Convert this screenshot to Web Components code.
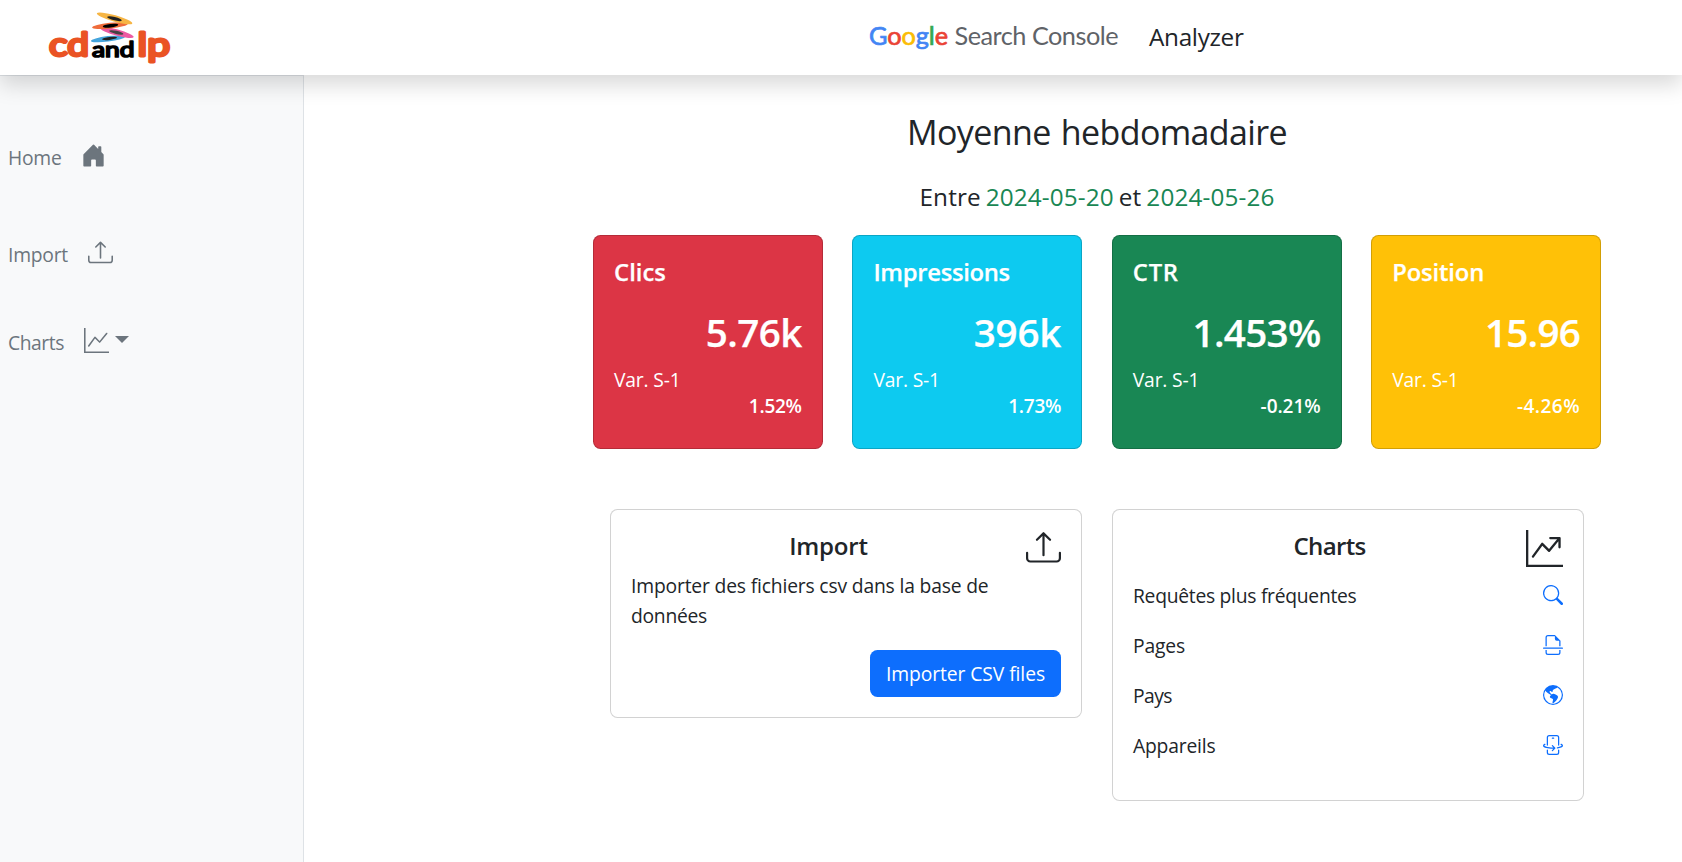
<!DOCTYPE html>
<html lang="fr">
<head>
<meta charset="utf-8">
<title>Search Console Analyzer</title>
<style>
html,body{margin:0;height:100%;overflow:hidden;background:#fff}
body{font-family:"Open Sans","Noto Sans",sans-serif;font-size:19.3px;line-height:30px;color:#212529}
</style>
</head>
<body>
<app-shell>
  <app-header slot="header"></app-header>
  <side-bar slot="side">
    <side-link label="Home" w="53.5" icon="house" gap="19.5"></side-link>
    <side-link label="Import" w="60" icon="upload" gap="20"></side-link>
    <side-link label="Charts" w="56" icon="graph" gap="20" caret></side-link>
  </side-bar>
  <dash-board></dash-board>
</app-shell>
<script>
const ICONS = {
  house: 'M6.5 14.5v-3.505c0-.245.25-.495.5-.495h2c.25 0 .5.25.5.5v3.5a.5.5 0 0 0 .5.5h4a.5.5 0 0 0 .5-.5v-7a.5.5 0 0 0-.146-.354L13 5.793V2.5a.5.5 0 0 0-.5-.5h-1a.5.5 0 0 0-.5.5v1.293L8.354 1.146a.5.5 0 0 0-.708 0l-6 6A.5.5 0 0 0 1.5 7.5v7a.5.5 0 0 0 .5.5h4a.5.5 0 0 0 .5-.5',
  upload: 'M.5 9.9a.5.5 0 0 1 .5.5v2.5a1 1 0 0 0 1 1h12a1 1 0 0 0 1-1v-2.5a.5.5 0 0 1 1 0v2.5a2 2 0 0 1-2 2H2a2 2 0 0 1-2-2v-2.5a.5.5 0 0 1 .5-.5M7.646 1.146a.5.5 0 0 1 .708 0l3 3a.5.5 0 0 1-.708.708L8.5 2.707V11.5a.5.5 0 0 1-1 0V2.707L5.354 4.854a.5.5 0 1 1-.708-.708z',
  graph: 'M0 0h1v15h15v1H0zM14.817 3.113a.5.5 0 0 1 .07.704l-4.5 5.5a.5.5 0 0 1-.74.037L7.06 6.767l-3.656 5.027a.5.5 0 0 1-.808-.588l4-5.5a.5.5 0 0 1 .758-.06l2.609 2.61 4.15-5.073a.5.5 0 0 1 .704-.07',
  arrow: 'M0 0h1v15h15v1H0zM10 3.5a.5.5 0 0 1 .5-.5h4a.5.5 0 0 1 .5.5v4a.5.5 0 0 1-1 0V4.9l-3.613 4.417a.5.5 0 0 1-.74.037L7.06 6.767l-3.656 5.027a.5.5 0 0 1-.808-.588l4-5.5a.5.5 0 0 1 .758-.06l2.609 2.61L13.445 4H10.5a.5.5 0 0 1-.5-.5',
  search: 'M11.742 10.344a6.5 6.5 0 1 0-1.397 1.398h-.001q.044.06.098.115l3.85 3.85a1 1 0 0 0 1.415-1.414l-3.85-3.85a1 1 0 0 0-.115-.1zM12 6.5a5.5 5.5 0 1 1-11 0 5.5 5.5 0 0 1 11 0',
  page: 'M14 4.5V9h-1V4.5h-2A1.5 1.5 0 0 1 9.5 3V1H4a1 1 0 0 0-1 1v7H2V2a2 2 0 0 1 2-2h5.5zM13 12h1v2a2 2 0 0 1-2 2H4a2 2 0 0 1-2-2v-2h1v2a1 1 0 0 0 1 1h8a1 1 0 0 0 1-1zM.5 10a.5.5 0 0 0 0 1h15a.5.5 0 0 0 0-1z',
  globe: 'M8 0a8 8 0 1 0 0 16A8 8 0 0 0 8 0M2.04 4.326c.325 1.329 2.532 2.54 3.717 3.19.48.263.793.434.743.484q-.121.12-.242.234c-.416.396-.787.749-.758 1.266.035.634.618.824 1.214 1.017.577.188 1.168.38 1.286.983.082.417-.075.988-.22 1.52-.215.782-.406 1.48.22 1.48 1.5-.5 3.798-3.186 4-5 .138-1.243-2-2-3.5-2.5-.478-.16-.755.081-.99.284-.172.15-.322.279-.51.216-.445-.148-2.5-2-1.5-2.5.78-.39.952-.171 1.227.182.078.099.163.208.273.318.609.304.662-.132.723-.633.039-.322.081-.671.277-.867.434-.434 1.265-.791 2.028-1.12.712-.306 1.365-.587 1.579-.88A7 7 0 1 1 2.04 4.327Z',
  phone: 'M11 1H5a1 1 0 0 0-1 1v6a.5.5 0 0 1-1 0V2a2 2 0 0 1 2-2h6a2 2 0 0 1 2 2v6a.5.5 0 0 1-1 0V2a1 1 0 0 0-1-1m1 13a1 1 0 0 1-1 1H5a1 1 0 0 1-1-1v-2a.5.5 0 0 0-1 0v2a2 2 0 0 0 2 2h6a2 2 0 0 0 2-2v-2a.5.5 0 0 0-1 0zM1.713 7.954a.5.5 0 1 0-.419-.908c-.347.16-.654.348-.882.57C.184 7.842 0 8.139 0 8.5c0 .546.408.94.823 1.201.44.278 1.043.51 1.745.696C3.978 10.773 5.898 11 8 11q.148 0 .294-.002l-1.148 1.148a.5.5 0 0 0 .708.708l2-2a.5.5 0 0 0 0-.708l-2-2a.5.5 0 1 0-.708.708l1.145 1.144L8 10c-2.04 0-3.87-.221-5.174-.569-.656-.175-1.151-.374-1.47-.575C1.012 8.639 1 8.506 1 8.5c0-.003 0-.059.112-.17.115-.112.31-.242.6-.376Zm12.993-.908a.5.5 0 0 0-.419.908c.292.134.486.264.6.377.113.11.113.166.113.169s0 .065-.13.187c-.132.122-.352.26-.677.4-.645.28-1.596.523-2.763.687a.5.5 0 0 0 .14.99c1.212-.17 2.26-.43 3.02-.758.38-.164.713-.357.96-.587.246-.229.45-.537.45-.919 0-.362-.184-.66-.412-.883s-.535-.411-.882-.571M7.5 2a.5.5 0 0 0 0 1h1a.5.5 0 0 0 0-1z'
};

const define = (name, render, after) => customElements.define(name, class extends HTMLElement {
  connectedCallback() {
    if (this.shadowRoot) return;
    this.attachShadow({ mode: 'open' }).innerHTML = render(this);
    if (after) after(this);
  }
});
const at = (el, n) => el.getAttribute(n) || '';

define('bs-icon', el => `<style>:host{display:block;flex:none;width:${at(el,'size')}px;height:${at(el,'size')}px}svg{display:block;width:100%;height:100%;fill:currentColor}</style>
<svg viewBox="0 0 16 16"><path d="${ICONS[at(el,'name')]}"/></svg>`);

// Text that tracks its letters so that the run takes the width given in "w".
define('fit-text', () => `<style>:host{display:inline-block;white-space:nowrap;flex:none}</style><slot></slot>`, el => {
  const natural = el.getBoundingClientRect().width;
  el.style.letterSpacing = ((+at(el,'w') - natural) / el.textContent.trim().length).toFixed(3) + 'px';
});

define('cdandlp-logo', () => `<style>:host{display:block;width:124px;height:54px}svg{display:block}text{font-family:Lato,sans-serif;font-weight:400;stroke-linejoin:round;stroke-linecap:round}</style>
<svg width="124" height="54" viewBox="48 11 124 54">
  <g>
    <ellipse cx="108" cy="38.8" rx="17.2" ry="2.7" fill="#45a5dc" transform="rotate(-7 108 38.8)"/>
    <ellipse cx="117" cy="32.6" rx="17.3" ry="3.1" fill="#ec5ba3" transform="rotate(15 117 32.6)"/>
    <ellipse cx="110" cy="25.6" rx="18" ry="2.9" fill="#ef6c3b" transform="rotate(-6 110 25.6)"/>
    <ellipse cx="114.6" cy="18.4" rx="18.4" ry="3.2" fill="#f6b544" transform="rotate(16 114.6 18.4)"/>
    <g fill="#222">
      <ellipse cx="114.5" cy="18.7" rx="7.5" ry="1.7" transform="rotate(14 114.5 18.7)"/>
      <ellipse cx="110.5" cy="25.7" rx="7.8" ry="1.8" fill="#000" transform="rotate(-7 110.5 25.7)"/>
      <ellipse cx="116.3" cy="32.4" rx="7.3" ry="1.6" fill="#444" transform="rotate(13 116.3 32.4)"/>
      <ellipse cx="109.5" cy="38.4" rx="7.5" ry="1.5" transform="rotate(-7 109.5 38.4)"/>
    </g>
  </g>
  <text x="49" y="56" font-size="33" fill="#ea5324" stroke="#ea5324" stroke-width="3" textLength="40" lengthAdjust="spacingAndGlyphs">cd</text>
  <text x="92" y="56.7" font-size="21.5" fill="#000" stroke="#000" stroke-width="1.7" textLength="42.5" lengthAdjust="spacingAndGlyphs">and</text>
  <text x="137.5" y="55.5" font-size="33" fill="#ea5324" stroke="#ea5324" stroke-width="3" textLength="32.5" lengthAdjust="spacingAndGlyphs">lp</text>
</svg>`);

define('gsc-logo', () => `<style>:host{display:flex;font-family:Lato,sans-serif;font-size:25.3px;line-height:30px;color:#5f6368}
.g{font-weight:400;margin-right:6.5px;-webkit-text-stroke:.7px}.b{color:#4285f4}.r{color:#ea4335}.y{color:#fbbc05}.v{color:#34a853}</style>
<fit-text class="g" w="79"><span class="b">G</span><span class="r">o</span><span class="y">o</span><span class="b">g</span><span class="v">l</span><span class="r">e</span></fit-text>
<fit-text w="163.5">Search Console</fit-text>`);

define('app-header', () => `<style>:host{display:flex;position:relative;z-index:2;height:75px;background:#fff;box-shadow:0 10px 20px rgba(0,0,0,.15)}
cdandlp-logo{margin:11px 0 0 48px}gsc-logo{margin:20px 0 0 697px}.a{margin:22px 0 0 31px;font-size:24.3px}</style>
<cdandlp-logo></cdandlp-logo><gsc-logo></gsc-logo><fit-text class="a" w="94.5">Analyzer</fit-text>`);

define('side-link', el => `<style>:host{display:flex;height:30px;color:#6c757d}bs-icon{margin:0 0 0 ${at(el,'gap')}px}
i{margin:8px 0 0 6px;width:0;height:0;border:7px solid transparent;border-top-color:currentColor;border-bottom:0}</style>
<fit-text w="${at(el,'w')}">${at(el,'label')}</fit-text><bs-icon name="${at(el,'icon')}" size="25"></bs-icon>${el.hasAttribute('caret') ? '<i></i>' : ''}`);

define('side-bar', () => `<style>:host{display:flex;flex-direction:column;box-sizing:border-box;width:304px;background:#f8f9fa;border:1px solid #dee2e6;border-width:1px 1px 0 0;padding:67px 0 0 8px}
::slotted(:nth-child(2)){margin-top:67px}::slotted(:nth-child(3)){margin-top:58px}</style><slot></slot>`);

define('stat-card', el => `<style>:host{display:flex;flex-direction:column;box-sizing:border-box;height:214px;padding:21px 20px 19px;border:1px solid rgba(0,0,0,.175);border-radius:7.5px;color:#fff;background:${at(el,'bg')}}
.t,.v,.p{font-weight:700}.t{font-size:23.8px;line-height:30px;align-self:flex-start}.v{font-size:38.6px;line-height:48px;margin-top:21px;align-self:flex-end}
.s{line-height:27px;margin-top:10px;align-self:flex-start}.p{font-size:19px;font-weight:650;line-height:27px;align-self:flex-end}.t,.v{font-weight:650;-webkit-text-stroke:.25px}</style>
<fit-text class="t" w="${at(el,'tw')}">${at(el,'title')}</fit-text>
<fit-text class="v" w="${at(el,'vw')}">${at(el,'value')}</fit-text>
<fit-text class="s" w="66.5">Var. S-1</fit-text>
<fit-text class="p" w="${at(el,'pw')}">${at(el,'pct')}</fit-text>`);

define('panel-card', el => `<style>:host{display:block;box-sizing:border-box;padding:20px;border:1px solid rgba(0,0,0,.175);border-radius:7.5px;background:#fff}
header{display:flex;height:40px}h5{flex:1;margin:1px 0 0;text-align:center;font-size:24.1px;font-weight:650;line-height:30px}</style>
<header><h5><fit-text w="${at(el,'tw')}">${at(el,'label')}</fit-text></h5><bs-icon name="${at(el,'icon')}" size="${at(el,'size')}"></bs-icon></header><slot></slot>`);

define('chart-row', el => `<style>:host{display:flex;justify-content:space-between;align-items:center;height:30px;margin-bottom:20px}bs-icon{color:#0d6efd}fit-text{padding-top:2px}</style>
<fit-text w="${at(el,'w')}">${at(el,'label')}</fit-text><bs-icon name="${at(el,'icon')}" size="20"></bs-icon>`);

define('dash-board', () => `<style>:host{display:flex;flex-direction:column;align-items:center;box-sizing:border-box;padding-top:36px;padding-left:208px}
.h{font-size:34px;line-height:42px;word-spacing:2px}.d{font-size:24.3px;line-height:30px;margin-top:29px;word-spacing:-1.5px}.d span{color:#198754}
.stats{display:grid;grid-template-columns:repeat(4,1fr);gap:29.6px;width:1008px;margin-top:23px}
.panels{display:grid;grid-template-columns:472px 472px;gap:30px;align-items:start;margin-top:60px}
p{margin:1px 0 -1px}.f{display:flex;justify-content:flex-end;margin-top:20px}
button{height:47px;border:0;border-radius:7.5px;background:#0d6efd;color:#fff;font:inherit;padding:0 16px}
.rows{padding-top:10px}</style>
<fit-text class="h" w="380">Moyenne hebdomadaire</fit-text>
<fit-text class="d" w="355">Entre <span>2024-05-20</span> et <span>2024-05-26</span></fit-text>
<div class="stats">
<stat-card bg="#dc3545" title="Clics" tw="52" value="5.76k" vw="96" pct="1.52%" pw="53"></stat-card>
<stat-card bg="#0dcaf0" title="Impressions" tw="136.5" value="396k" vw="87.5" pct="1.73%" pw="53"></stat-card>
<stat-card bg="#198754" title="CTR" tw="46" value="1.453%" vw="128" pct="-0.21%" pw="60"></stat-card>
<stat-card bg="#ffc107" title="Position" tw="92" value="15.96" vw="95" pct="-4.26%" pw="63"></stat-card>
</div>
<div class="panels">
<panel-card label="Import" tw="78.5" icon="upload" size="35">
<p><fit-text w="357.5">Importer des fichiers csv dans la base de</fit-text><br><fit-text w="76">données</fit-text></p>
<div class="f"><button><fit-text w="159">Importer CSV files</fit-text></button></div>
</panel-card>
<panel-card label="Charts" tw="72" icon="arrow" size="37"><div class="rows">
<chart-row label="Requêtes plus fréquentes" w="223.5" icon="search"></chart-row>
<chart-row label="Pages" w="52" icon="page"></chart-row>
<chart-row label="Pays" w="39" icon="globe"></chart-row>
<chart-row label="Appareils" w="82.5" icon="phone"></chart-row>
</div></panel-card>
</div>`);

define('app-shell', () => `<style>:host{display:grid;grid-template:75px 1fr / 304px 1fr;height:100vh}
slot[name=header]::slotted(*){grid-column:1/3}</style><slot name="header"></slot><slot name="side"></slot><slot></slot>`);
</script>
</body>
</html>
